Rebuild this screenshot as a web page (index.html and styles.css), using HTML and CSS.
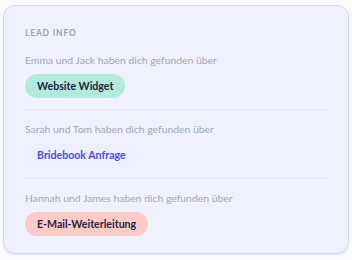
FILE: index.html
```html
<!DOCTYPE html>
<html lang="de">
<head>
  <meta charset="UTF-8">
  <title>Lead Info</title>
  <meta name="viewport" content="width=device-width, initial-scale=1.0">
  <link rel="stylesheet" href="styles.css">
</head>
<body>
  <div class="card">
    <div class="card-title">Lead Info</div>

    <div class="lead">
      <div class="lead-text">Emma und Jack haben dich gefunden über</div>
      <span class="source source-widget">Website Widget</span>
    </div>

    <div class="lead">
      <div class="lead-text">Sarah und Tom haben dich gefunden über</div>
      <span class="source source-bridebook">Bridebook Anfrage</span>
    </div>

    <div class="lead">
      <div class="lead-text">Hannah und James haben dich gefunden über</div>
      <span class="source source-mail">E-Mail-Weiterleitung</span>
    </div>
  </div>
</body>
</html>
```

FILE: styles.css
```css
body {
  margin: 0;
  padding: 5px 3px;
  background: #fbfbff;
  font-family: 'Lato', sans-serif;
}
.card {
  height: 249px;
  box-sizing: border-box;
  background: #f0f1fe;
  border: 1.5px solid #d4d6f6;
  border-radius: 12px;
  padding: 20px 21px 0 21px;
  box-shadow: 0 1px 2px rgba(120,120,200,0.15);
}
.card-title {
  font-size: 8.5px;
  font-weight: bold;
  letter-spacing: 0.8px;
  text-transform: uppercase;
  color: #9c9fb2;
  line-height: 14px;
  margin-bottom: 11px;
}
.lead {
  padding: 0 0 11px;
  border-bottom: 1px solid #e2e4f6;
  margin-bottom: 10px;
}
.lead:last-child {
  border-bottom: none;
}
.lead-text {
  font-size: 10.4px;
  line-height: 18px;
  color: #a3a6b8;
  margin-bottom: 5px;
}
.source {
  display: inline-block;
  font-size: 10.6px;
  font-weight: bold;
  line-height: 16px;
  padding: 4px 12px;
  border-radius: 12px;
}
.source-widget {
  background: #b2eadb;
  color: #1c2346;
}
.source-bridebook {
  background: #edeffe;
  color: #4b4ee0;
}
.source-mail {
  background: #fecbc6;
  color: #1c2346;
}
```
